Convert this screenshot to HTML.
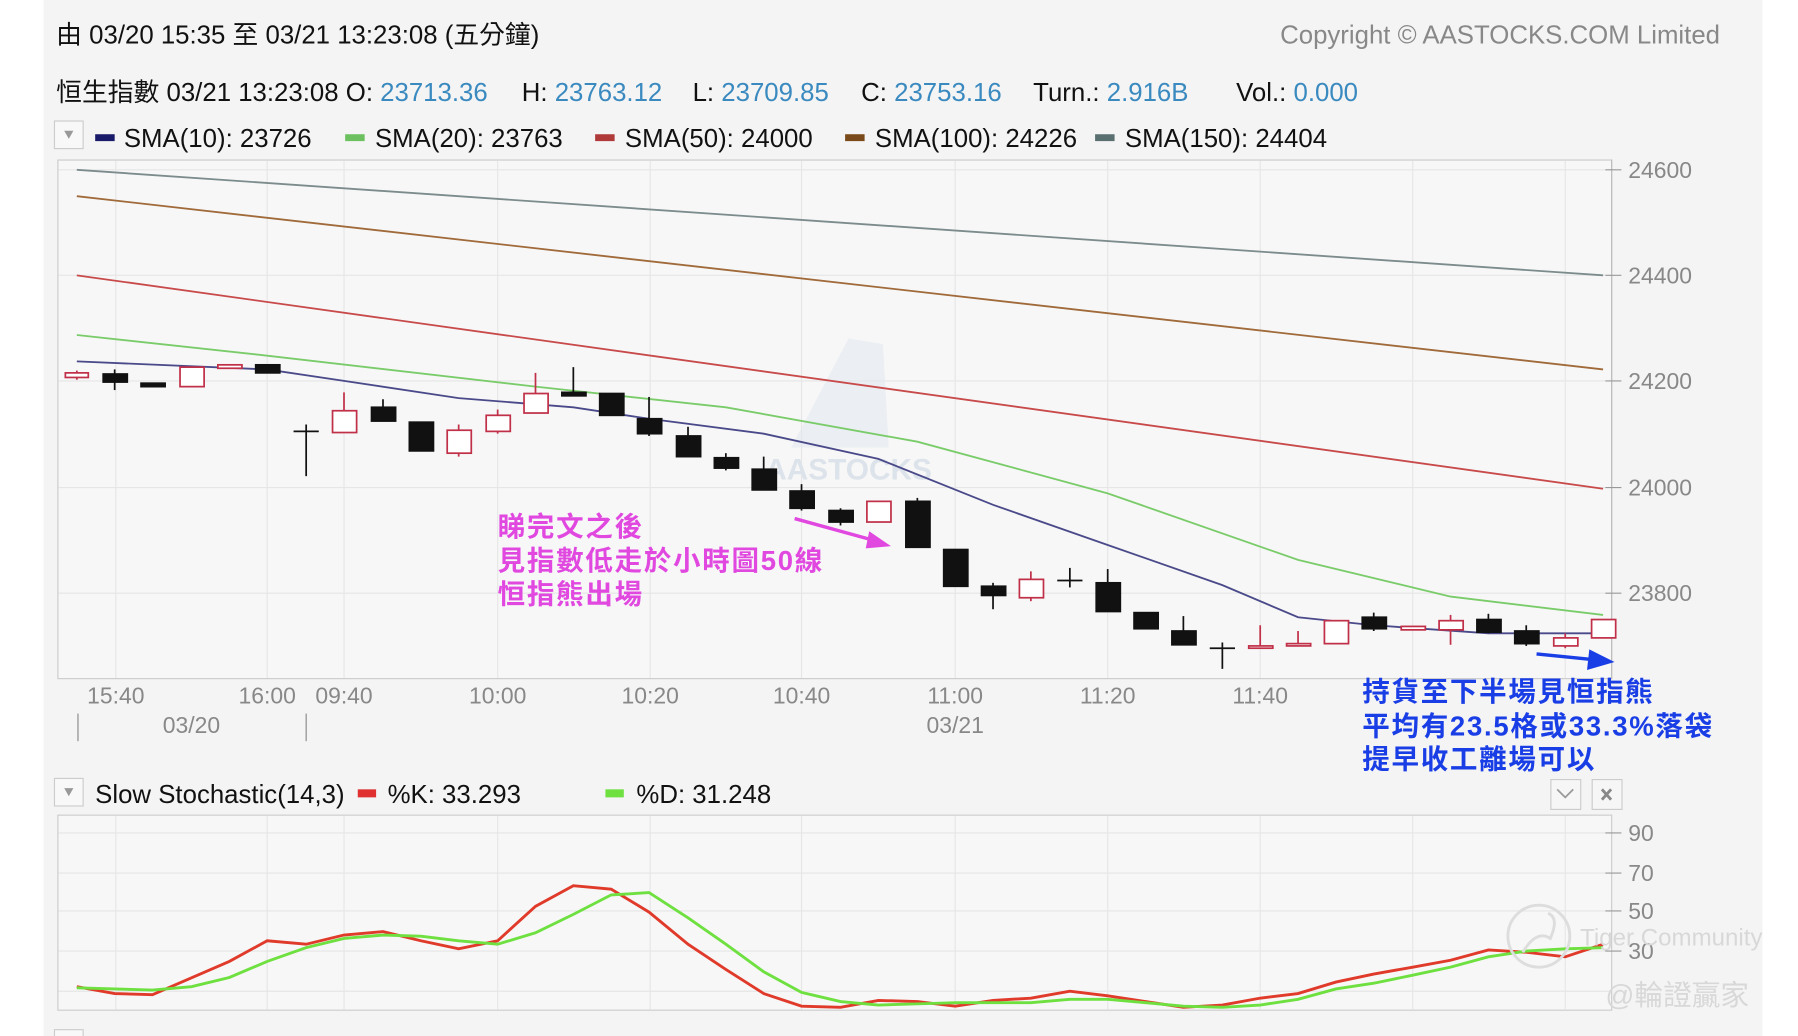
<!DOCTYPE html>
<html><head><meta charset="utf-8"><style>
html,body{margin:0;padding:0;background:#fff;}
svg{display:block;}
text{font-family:"Liberation Sans","Noto Sans CJK TC",sans-serif;}
</style></head><body>
<svg width="1798" height="1036" viewBox="0 0 1568 903" preserveAspectRatio="none" xmlns="http://www.w3.org/2000/svg">
<rect x="0" y="0" width="1568" height="903" fill="#fff"/>
<rect x="38" y="0" width="1499" height="903" fill="#f4f4f4"/>
<!-- header -->
<text x="49" y="38" font-size="22.5" fill="#111">由 03/20 15:35 至 03/21 13:23:08 (五分鐘)</text>
<text x="1500" y="38" font-size="22.5" fill="#888" text-anchor="end">Copyright © AASTOCKS.COM Limited</text>
<text x="49" y="88" font-size="22.5" fill="#111">恒生指數 03/21 13:23:08 O: <tspan fill="#3a8ac0">23713.36</tspan><tspan x="455">H: </tspan><tspan fill="#3a8ac0">23763.12</tspan><tspan x="604">L: </tspan><tspan fill="#3a8ac0">23709.85</tspan><tspan x="751">C: </tspan><tspan fill="#3a8ac0">23753.16</tspan><tspan x="901">Turn.: </tspan><tspan fill="#3a8ac0">2.916B</tspan><tspan x="1078">Vol.: </tspan><tspan fill="#3a8ac0">0.000</tspan></text>
<!-- legend -->
<rect x="47.5" y="105.5" width="25" height="24" fill="#f8f8f8" stroke="#ccc"/>
<path d="M56 114 L64 114 L60 121 Z" fill="#999"/>
<g font-size="22.5" fill="#111">
<rect x="83" y="117" width="17" height="6" fill="#1a1a6a"/><text x="108" y="128">SMA(10): 23726</text>
<rect x="301" y="117" width="17" height="6" fill="#6cc060"/><text x="327" y="128">SMA(20): 23763</text>
<rect x="519" y="117" width="17" height="6" fill="#b03a3a"/><text x="545" y="128">SMA(50): 24000</text>
<rect x="737" y="117" width="17" height="6" fill="#7a4a1a"/><text x="763" y="128">SMA(100): 24226</text>
<rect x="955" y="117" width="17" height="6" fill="#5a7070"/><text x="981" y="128">SMA(150): 24404</text>
</g>
<!-- main plot -->
<rect x="50.5" y="139.5" width="1355" height="452" fill="#f7f7f7" stroke="#ccc"/>
<g stroke="#e6e6e6" stroke-width="1">
<line x1="101" y1="140" x2="101" y2="591"/><line x1="233" y1="140" x2="233" y2="591"/><line x1="300" y1="140" x2="300" y2="591"/><line x1="434" y1="140" x2="434" y2="591"/><line x1="567" y1="140" x2="567" y2="591"/><line x1="699" y1="140" x2="699" y2="591"/><line x1="833" y1="140" x2="833" y2="591"/><line x1="966" y1="140" x2="966" y2="591"/><line x1="1099" y1="140" x2="1099" y2="591"/><line x1="1232" y1="140" x2="1232" y2="591"/><line x1="1365" y1="140" x2="1365" y2="591"/>
<line x1="51" y1="148" x2="1405" y2="148"/><line x1="51" y1="240" x2="1405" y2="240"/><line x1="51" y1="332" x2="1405" y2="332"/><line x1="51" y1="425" x2="1405" y2="425"/><line x1="51" y1="517" x2="1405" y2="517"/>
</g>
<line x1="1405.5" y1="139" x2="1405.5" y2="592" stroke="#bbb"/>
<g stroke="#999"><line x1="1400" y1="148" x2="1414" y2="148"/><line x1="1400" y1="240" x2="1414" y2="240"/><line x1="1400" y1="332" x2="1414" y2="332"/><line x1="1400" y1="425" x2="1414" y2="425"/><line x1="1400" y1="517" x2="1414" y2="517"/></g>
<g font-size="20" fill="#888"><text x="1420" y="155">24600</text><text x="1420" y="247">24400</text><text x="1420" y="339">24200</text><text x="1420" y="432">24000</text><text x="1420" y="524">23800</text></g>
<!-- watermark -->
<text x="740" y="418" font-size="26" fill="#dde3ea" text-anchor="middle" font-weight="bold">AASTOCKS</text>
<path d="M690 390 L740 295 L770 300 L775 390 Z" fill="#e3e8ee" opacity="0.6"/>
<!-- SMA lines -->
<g fill="none" stroke-width="1.6">
<polyline stroke="#7c8c8c" points="67,148 1398,240"/>
<polyline stroke="#a06a3a" points="67,171 1398,322"/>
<polyline stroke="#c84a4a" points="67,240 1398,426"/>
<polyline stroke="#7acc6a" points="67,292 233,310 467,337 633,355 800,385 966,430 1132,488 1265,520 1398,536"/>
<polyline stroke="#4a4a8a" points="67,315 233,322 300,332 400,347 500,355 566,365 666,378 766,400 866,440 966,475 1066,510 1132,538 1198,545 1298,552 1398,552"/>
</g>
<!-- candles -->
<g stroke-width="1.5">
<g stroke="#c03048" fill="#fff">
<line x1="67" y1="323" x2="67" y2="331"/><rect x="57" y="325" width="20" height="4"/>
<rect x="157" y="320" width="21" height="17"/>
<rect x="190" y="318" width="21" height="3"/>
<line x1="300" y1="342" x2="300" y2="358"/><rect x="290" y="358" width="21" height="19"/>
<line x1="400" y1="370" x2="400" y2="398"/><rect x="390" y="375" width="21" height="20"/>
<line x1="434" y1="357" x2="434" y2="378"/><rect x="424" y="362" width="21" height="14"/>
<line x1="467" y1="325" x2="467" y2="343"/><rect x="457" y="343" width="21" height="17"/>
<rect x="756" y="437" width="21" height="18"/>
<line x1="899" y1="498" x2="899" y2="524"/><rect x="889" y="505" width="21" height="16"/>
<line x1="1099" y1="545" x2="1099" y2="565"/><rect x="1089" y="563" width="21" height="2"/>
<line x1="1132" y1="550" x2="1132" y2="563"/><rect x="1122" y="561" width="21" height="2"/>
<rect x="1155" y="541" width="21" height="20"/>
<rect x="1222" y="546" width="21" height="3"/>
<line x1="1265" y1="536" x2="1265" y2="562"/><rect x="1255" y="541" width="21" height="8"/>
<line x1="1365" y1="552" x2="1365" y2="565"/><rect x="1355" y="556" width="21" height="7"/>
<rect x="1388" y="540" width="21" height="16"/>
</g>
<g stroke="#111" fill="#111">
<line x1="100" y1="322" x2="100" y2="340"/><rect x="90" y="326" width="21" height="7"/>
<rect x="123" y="334" width="21" height="3"/>
<rect x="223" y="318" width="21" height="7"/>
<line x1="267" y1="370" x2="267" y2="415"/><line x1="256" y1="376" x2="278" y2="376"/>
<line x1="334" y1="348" x2="334" y2="367"/><rect x="324" y="355" width="21" height="12"/>
<rect x="357" y="368" width="21" height="25"/>
<line x1="500" y1="320" x2="500" y2="345"/><rect x="490" y="342" width="21" height="3"/>
<rect x="523" y="343" width="21" height="19"/>
<line x1="566" y1="346" x2="566" y2="380"/><rect x="556" y="365" width="21" height="13"/>
<line x1="600" y1="372" x2="600" y2="398"/><rect x="590" y="380" width="21" height="18"/>
<line x1="633" y1="395" x2="633" y2="410"/><rect x="623" y="399" width="21" height="9"/>
<line x1="666" y1="398" x2="666" y2="427"/><rect x="656" y="409" width="21" height="18"/>
<line x1="699" y1="422" x2="699" y2="445"/><rect x="689" y="428" width="21" height="15"/>
<line x1="733" y1="443" x2="733" y2="458"/><rect x="723" y="445" width="21" height="10"/>
<line x1="800" y1="434" x2="800" y2="477"/><rect x="790" y="437" width="21" height="40"/>
<rect x="823" y="479" width="21" height="32"/>
<line x1="866" y1="508" x2="866" y2="531"/><rect x="856" y="511" width="21" height="8"/>
<line x1="933" y1="495" x2="933" y2="512"/><line x1="922" y1="506" x2="944" y2="506"/>
<line x1="966" y1="496" x2="966" y2="533"/><rect x="956" y="508" width="21" height="25"/>
<rect x="989" y="534" width="21" height="14"/>
<line x1="1032" y1="537" x2="1032" y2="562"/><rect x="1022" y="550" width="21" height="12"/>
<line x1="1066" y1="560" x2="1066" y2="583"/><line x1="1055" y1="565" x2="1077" y2="565"/>
<line x1="1198" y1="534" x2="1198" y2="550"/><rect x="1188" y="538" width="21" height="10"/>
<line x1="1298" y1="535" x2="1298" y2="552"/><rect x="1288" y="540" width="21" height="11"/>
<line x1="1331" y1="545" x2="1331" y2="563"/><rect x="1321" y="550" width="21" height="11"/>
</g>
</g>
<!-- x labels -->
<g font-size="20" fill="#888" text-anchor="middle">
<text x="101" y="613">15:40</text><text x="233" y="613">16:00</text><text x="300" y="613">09:40</text><text x="434" y="613">10:00</text><text x="567" y="613">10:20</text><text x="699" y="613">10:40</text><text x="833" y="613">11:00</text><text x="966" y="613">11:20</text><text x="1099" y="613">11:40</text>
<text x="167" y="639">03/20</text><text x="833" y="639">03/21</text>
</g>
<g stroke="#888"><line x1="68" y1="622" x2="68" y2="646"/><line x1="267" y1="622" x2="267" y2="646"/></g>
<!-- annotations -->
<g font-size="24" font-weight="bold" fill="#e048e0" letter-spacing="1.5">
<text x="434" y="467">睇完文之後</text><text x="434" y="497">見指數低走於小時圖50線</text><text x="434" y="526">恒指熊出場</text>
</g>
<line x1="693" y1="452" x2="762" y2="471" stroke="#e048e0" stroke-width="3"/>
<path d="M777 476 L758 463 L755 478 Z" fill="#e048e0"/>
<g font-size="24" font-weight="bold" fill="#1a3ee6" letter-spacing="1.5">
<text x="1188" y="611">持貨至下半場見恒指熊</text><text x="1188" y="641">平均有23.5格或33.3%落袋</text><text x="1188" y="670">提早收工離場可以</text>
</g>
<line x1="1340" y1="570" x2="1390" y2="575" stroke="#1a3ee6" stroke-width="3"/>
<path d="M1408 577 L1386 566 L1384 584 Z" fill="#1a3ee6"/>
<!-- stochastic header -->
<rect x="47.5" y="678.5" width="25" height="24" fill="#f8f8f8" stroke="#ccc"/>
<path d="M56 687 L64 687 L60 694 Z" fill="#999"/>
<g font-size="22.5" fill="#111">
<text x="83" y="700">Slow Stochastic(14,3)</text>
<rect x="312" y="688" width="16" height="7" fill="#e03030"/><text x="338" y="700">%K: 33.293</text>
<rect x="528" y="688" width="16" height="7" fill="#6ee040"/><text x="555" y="700">%D: 31.248</text>
</g>
<rect x="1352.5" y="679.5" width="26" height="26" fill="#f6f6f6" stroke="#ccc"/>
<path d="M1358 688 L1365 695 L1372 688" stroke="#999" stroke-width="1.5" fill="none"/>
<rect x="1388.5" y="679.5" width="26" height="26" fill="#f6f6f6" stroke="#ccc"/>
<path d="M1397 688 L1405 697 M1405 688 L1397 697" stroke="#888" stroke-width="2.5"/>
<!-- stochastic plot -->
<rect x="50.5" y="710.5" width="1355" height="170" fill="#f7f7f7" stroke="#ccc"/>
<g stroke="#e6e6e6">
<line x1="51" y1="726" x2="1405" y2="726"/><line x1="51" y1="761" x2="1405" y2="761"/><line x1="51" y1="794" x2="1405" y2="794"/><line x1="51" y1="829" x2="1405" y2="829"/><line x1="51" y1="864" x2="1405" y2="864"/>
<line x1="101" y1="711" x2="101" y2="880"/><line x1="233" y1="711" x2="233" y2="880"/><line x1="300" y1="711" x2="300" y2="880"/><line x1="434" y1="711" x2="434" y2="880"/><line x1="567" y1="711" x2="567" y2="880"/><line x1="699" y1="711" x2="699" y2="880"/><line x1="833" y1="711" x2="833" y2="880"/><line x1="966" y1="711" x2="966" y2="880"/><line x1="1099" y1="711" x2="1099" y2="880"/><line x1="1232" y1="711" x2="1232" y2="880"/><line x1="1365" y1="711" x2="1365" y2="880"/>
</g>
<g stroke="#999"><line x1="1400" y1="726" x2="1414" y2="726"/><line x1="1400" y1="761" x2="1414" y2="761"/><line x1="1400" y1="794" x2="1414" y2="794"/><line x1="1400" y1="829" x2="1414" y2="829"/></g>
<g font-size="20" fill="#888"><text x="1420" y="733">90</text><text x="1420" y="768">70</text><text x="1420" y="801">50</text><text x="1420" y="836">30</text></g>
<polyline fill="none" stroke="#e03a2a" stroke-width="2.5" points="67,860 100,866 133,867 200,838 233,820 267,823 300,815 334,812 367,820 400,827 434,820 467,790 500,772 533,775 566,795 600,823 633,845 666,866 699,877 733,878 766,872 800,873 833,877 866,872 899,870 933,864 966,868 999,873 1032,878 1066,876 1099,870 1132,866 1165,856 1198,849 1232,843 1265,837 1298,828 1331,830 1365,834 1398,823"/>
<polyline fill="none" stroke="#6ee040" stroke-width="2.5" points="67,861 100,862 133,863 167,860 200,852 233,838 267,826 300,818 334,815 367,816 400,820 434,823 467,813 500,797 533,780 566,778 600,800 633,823 666,847 699,865 733,873 766,876 800,875 833,874 866,874 899,874 933,871 966,871 999,874 1032,877 1066,878 1099,876 1132,871 1165,862 1198,857 1232,850 1265,843 1298,834 1331,829 1365,827 1398,826"/>
<rect x="47.5" y="897.5" width="25" height="10" fill="#f8f8f8" stroke="#ccc"/>
<!-- tiger watermark -->
<circle cx="1342" cy="816" r="27" fill="none" stroke="#ddd" stroke-width="2.5"/>
<path d="M1328 830 Q1340 810 1352 818 Q1360 800 1350 796" fill="none" stroke="#ddd" stroke-width="2.5"/>
<text x="1378" y="824" font-size="21" fill="#d8d8d8">Tiger Community</text>
<text x="1400" y="876" font-size="25" fill="#d8d8d8">@輪證贏家</text>
</svg>
</body></html>
